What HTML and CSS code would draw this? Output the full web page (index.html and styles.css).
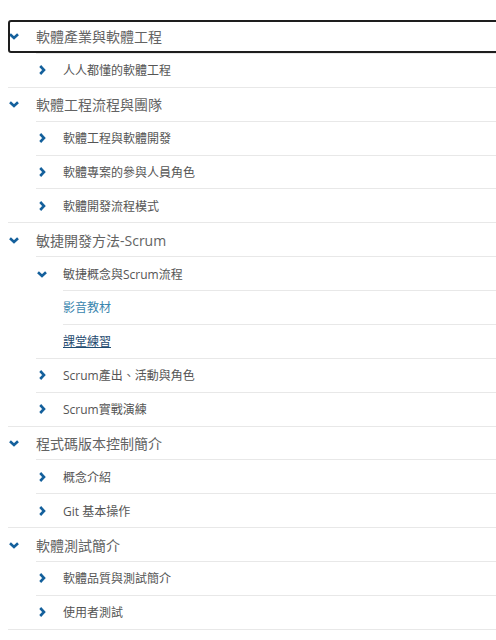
FILE: index.html
```html
<!DOCTYPE html>
<html lang="zh-Hant">
<head>
<meta charset="utf-8">
<link rel="stylesheet" href="styles.css">
</head>
<body>
<ul class="tree">
  <li class="grp">
    <div class="row top focus"><span class="chev"><svg viewBox="0 0 10 10"><polyline points="1,3.2 5,7 9,3.2"/></svg></span><span class="lbl">軟體產業與軟體工程</span></div>
    <ul class="sub">
      <li><div class="row"><span class="chev"><svg viewBox="0 0 10 10"><polyline points="3.2,1 7,5 3.2,9"/></svg></span><span class="lbl">人人都懂的軟體工程</span></div></li>
    </ul>
  </li>
  <li class="grp">
    <div class="row top"><span class="chev"><svg viewBox="0 0 10 10"><polyline points="1,3.2 5,7 9,3.2"/></svg></span><span class="lbl">軟體工程流程與團隊</span></div>
    <ul class="sub">
      <li><div class="row"><span class="chev"><svg viewBox="0 0 10 10"><polyline points="3.2,1 7,5 3.2,9"/></svg></span><span class="lbl">軟體工程與軟體開發</span></div></li>
      <li><div class="row"><span class="chev"><svg viewBox="0 0 10 10"><polyline points="3.2,1 7,5 3.2,9"/></svg></span><span class="lbl">軟體專案的參與人員角色</span></div></li>
      <li><div class="row"><span class="chev"><svg viewBox="0 0 10 10"><polyline points="3.2,1 7,5 3.2,9"/></svg></span><span class="lbl">軟體開發流程模式</span></div></li>
    </ul>
  </li>
  <li class="grp">
    <div class="row top"><span class="chev"><svg viewBox="0 0 10 10"><polyline points="1,3.2 5,7 9,3.2"/></svg></span><span class="lbl">敏捷開發方法-Scrum</span></div>
    <ul class="sub">
      <li><div class="row"><span class="chev"><svg viewBox="0 0 10 10"><polyline points="1,3.2 5,7 9,3.2"/></svg></span><span class="lbl">敏捷概念與Scrum流程</span></div>
        <ul class="sub leaves">
          <li><div class="row"><a class="link" href="#">影音教材</a></div></li>
          <li><div class="row"><a class="link visited" href="#">課堂練習</a></div></li>
        </ul>
      </li>
      <li><div class="row"><span class="chev"><svg viewBox="0 0 10 10"><polyline points="3.2,1 7,5 3.2,9"/></svg></span><span class="lbl">Scrum產出、活動與角色</span></div></li>
      <li><div class="row"><span class="chev"><svg viewBox="0 0 10 10"><polyline points="3.2,1 7,5 3.2,9"/></svg></span><span class="lbl">Scrum實戰演練</span></div></li>
    </ul>
  </li>
  <li class="grp">
    <div class="row top"><span class="chev"><svg viewBox="0 0 10 10"><polyline points="1,3.2 5,7 9,3.2"/></svg></span><span class="lbl">程式碼版本控制簡介</span></div>
    <ul class="sub">
      <li><div class="row"><span class="chev"><svg viewBox="0 0 10 10"><polyline points="3.2,1 7,5 3.2,9"/></svg></span><span class="lbl">概念介紹</span></div></li>
      <li><div class="row"><span class="chev"><svg viewBox="0 0 10 10"><polyline points="3.2,1 7,5 3.2,9"/></svg></span><span class="lbl">Git 基本操作</span></div></li>
    </ul>
  </li>
  <li class="grp">
    <div class="row top"><span class="chev"><svg viewBox="0 0 10 10"><polyline points="1,3.2 5,7 9,3.2"/></svg></span><span class="lbl">軟體測試簡介</span></div>
    <ul class="sub">
      <li><div class="row"><span class="chev"><svg viewBox="0 0 10 10"><polyline points="3.2,1 7,5 3.2,9"/></svg></span><span class="lbl">軟體品質與測試簡介</span></div></li>
      <li><div class="row"><span class="chev"><svg viewBox="0 0 10 10"><polyline points="3.2,1 7,5 3.2,9"/></svg></span><span class="lbl">使用者測試</span></div></li>
    </ul>
  </li>
</ul>
</body>
</html>
```

FILE: styles.css
```css
html, body {
  overflow: hidden;
}
body {
  margin: 0;
  padding: 20px 0 0 8px;
  background: #fff;
  font-family: "Open Sans", "Noto Sans CJK TC", sans-serif;
}
.tree {
  list-style: none;
  margin: 0;
  padding: 0;
  width: 510px;
}
.grp {
  border-bottom: 1px solid #e8e8e8;
}
.sub {
  list-style: none;
  margin: 0 0 0 28px;
  padding: 0;
}
.sub li {
  border-top: 1px solid #e8e8e8;
}
.sub.leaves {
  margin-left: 27px;
}
.row {
  display: flex;
  align-items: center;
  height: 32.88px;
  box-sizing: border-box;
}
.chev {
  flex: none;
  width: 27px;
  display: flex;
  align-items: center;
}
.top .chev {
  width: 28px;
}
.chev svg {
  width: 10px;
  height: 10px;
  margin-left: 1px;
  fill: none;
  stroke: #14609c;
  stroke-width: 2.6;
}
.top .lbl {
  font-size: 14px;
  color: #636363;
}
.sub .lbl {
  font-size: 12px;
  color: #555;
}
.focus {
  outline: 2px solid #1e1e1e;
  outline-offset: -2px;
  border-radius: 3px;
}
.link {
  font-size: 12px;
  color: #3a86ae;
  text-decoration: none;
}
.link.visited {
  color: #1f4b70;
  text-decoration: underline;
}
```
